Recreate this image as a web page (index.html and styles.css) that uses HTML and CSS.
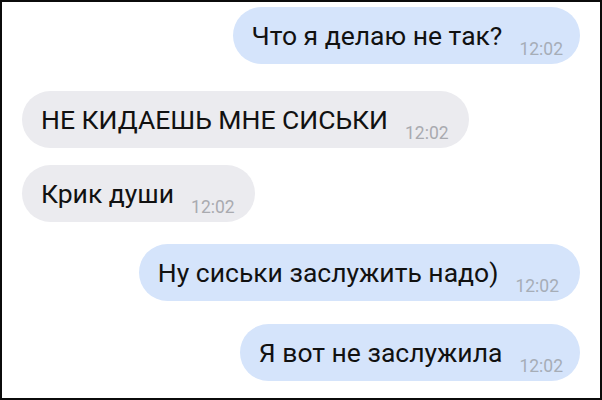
FILE: index.html
```html
<!DOCTYPE html>
<html>
<head>
  <meta charset="utf-8">
  <title>Чат</title>
  <link rel="stylesheet" href="styles.css">
</head>
<body>
  <div class="frame">
    <div class="chat">
      <div class="msg out first">
        <div class="bubble"><span class="text">Что я делаю не так?</span><span class="time">12:02</span></div>
      </div>
      <div class="msg in second">
        <div class="bubble"><span class="text">НЕ КИДАЕШЬ МНЕ СИСЬКИ</span><span class="time">12:02</span></div>
      </div>
      <div class="msg in third">
        <div class="bubble"><span class="text">Крик души</span><span class="time">12:02</span></div>
      </div>
      <div class="msg out fourth">
        <div class="bubble"><span class="text">Ну сиськи заслужить надо)</span><span class="time">12:02</span></div>
      </div>
      <div class="msg out fifth">
        <div class="bubble"><span class="text">Я вот не заслужила</span><span class="time">12:02</span></div>
      </div>
    </div>
  </div>
</body>
</html>
```

FILE: styles.css
```css
body {
  margin: 0;
  padding: 0;
  background: #fff;
  font-family: Roboto, "Noto Sans", Arial, sans-serif;
}

.frame {
  box-sizing: border-box;
  width: 602px;
  height: 400px;
  border: 2px solid #0b0b0b;
  background: #fff;
  overflow: hidden;
}

.chat {
  display: flex;
  flex-direction: column;
  padding: 5px 20px 0 20px;
}

.msg { display: flex; }
.msg.in { justify-content: flex-start; }
.msg.out { justify-content: flex-end; }

.msg.second { margin-top: 27px; }
.msg.third { margin-top: 17px; }
.msg.fourth { margin-top: 22px; }
.msg.fifth { margin-top: 23px; }

.bubble {
  display: flex;
  align-items: flex-end;
  padding: 14px 20px 13px 19px;
  border-radius: 30px;
  white-space: nowrap;
}

.msg.out .bubble { background: #d5e4fb; }
.msg.in .bubble { background: #ebebef; }

.msg.out .bubble { padding-right: 17px; }
.msg.fourth .bubble { padding-right: 21px; }

.text {
  font-size: 26.5px;
  line-height: 30px;
  color: #111;
}

.time {
  margin-left: 17px;
  margin-bottom: -6px;
  font-size: 17.5px;
  line-height: 16px;
  color: #a6adb7;
}

.msg.in .time { color: #a9aaaf; }
```
